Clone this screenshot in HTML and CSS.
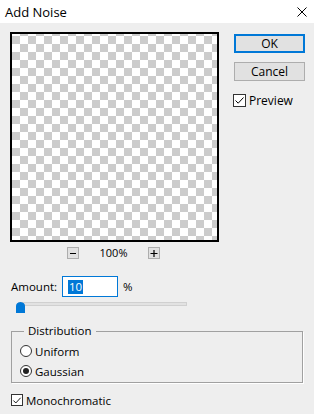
FILE: index.html
```html
<!DOCTYPE html>
<html>
  <head>
    <meta charset="utf-8" />
    <title>Add Noise</title>
    <link rel="stylesheet" href="styles.css">
  </head>
  <body>
    <div class="dialog">
      <div class="titlebar">
        <span class="title">Add Noise</span>
        <svg class="close" width="10" height="10" viewBox="0 0 10 10">
          <path d="M0.5 0.5 L9.5 9.5 M9.5 0.5 L0.5 9.5" stroke="#000" stroke-width="1" fill="none"/>
        </svg>
      </div>

      <div class="top">
        <div class="preview-col">
          <div class="preview"></div>
          <div class="zoom-row">
            <span class="zoom-btn">
              <svg width="10" height="10" viewBox="0 0 10 10"><path d="M2 5.5 H8" stroke="#000" stroke-width="1"/></svg>
            </span>
            <span class="zoom-value">100%</span>
            <span class="zoom-btn">
              <svg width="10" height="10" viewBox="0 0 10 10"><path d="M1.5 5.5 H8.5 M5 2 V9" stroke="#000" stroke-width="1.2"/></svg>
            </span>
          </div>
        </div>
        <div class="actions">
          <div class="btn btn-default">OK</div>
          <div class="btn">Cancel</div>
          <div class="check preview-check">
            <span class="box">
              <svg width="11" height="11" viewBox="0 0 11 11"><path d="M1.5 5.5 L4.2 8.2 L9.5 2.5" stroke="#000" stroke-width="1" fill="none"/></svg>
            </span>
            Preview
          </div>
        </div>
      </div>

      <div class="amount-row">
        <span class="amount-label">Amount:</span>
        <span class="amount-input"><span class="selected">10</span></span>
        <span class="percent">%</span>
      </div>

      <div class="slider">
        <div class="track"></div>
        <svg class="thumb" width="9" height="11" viewBox="0 0 9 11">
          <path d="M0 11 V4 Q0 0.5 4.5 0 Q9 0.5 9 4 V11 Z" fill="#0078d7"/>
        </svg>
      </div>

      <fieldset class="group">
        <legend>Distribution</legend>
        <div class="radio-row"><span class="radio"></span>Uniform</div>
        <div class="radio-row"><span class="radio on"></span>Gaussian</div>
      </fieldset>

      <div class="check mono">
        <span class="box">
          <svg width="11" height="11" viewBox="0 0 11 11"><path d="M1.5 5.5 L4.2 8.2 L9.5 2.5" stroke="#000" stroke-width="1" fill="none"/></svg>
        </span>
        Monochromatic
      </div>
    </div>
  </body>
</html>
```

FILE: styles.css
```css
body {
    margin: 0;
    background: #eeeeee;
    color: #000;
    font-family: "Open Sans", "Noto Sans", sans-serif;
    font-size: 11.5px;
}
.dialog {
    width: 314px;
    height: 414px;
}
.titlebar {
    height: 23px;
    background: #fff;
    display: flex;
    align-items: center;
    justify-content: space-between;
    padding: 0 7px 0 5px;
}
.title {
    font-size: 13px;
}
.top {
    display: flex;
    padding: 9px 0 0 10px;
}
.preview-col {
    width: 209px;
}
.preview {
    height: 210px;
    box-sizing: border-box;
    border: 2px solid #000;
    background-image: conic-gradient(#fff 25%, #cccccc 0 50%, #fff 0 75%, #cccccc 0);
    background-size: 16px 16px;
    background-position: 0 2px;
}
.zoom-row {
    display: flex;
    align-items: center;
    height: 12px;
    margin-top: 5px;
    padding-left: 57px;
}
.zoom-btn {
    width: 12px;
    height: 12px;
    box-sizing: border-box;
    border: 1px solid #adadad;
    background: #e1e1e1;
    display: flex;
    align-items: center;
    justify-content: center;
}
.zoom-value {
    width: 69px;
    text-align: center;
    font-size: 11px;
    line-height: 12px;
}
.actions {
    width: 71px;
    margin-left: 15px;
    padding-top: 2px;
}
.btn {
    height: 19px;
    box-sizing: border-box;
    border: 1px solid #adadad;
    background: #e1e1e1;
    display: flex;
    align-items: center;
    justify-content: center;
    font-size: 12px;
    margin-bottom: 9px;
}
.btn-default {
    border-color: #0078d7;
    box-shadow: inset 0 0 0 1px #0078d7;
}
.check {
    display: flex;
    align-items: center;
    height: 20px;
}
.box {
    width: 13px;
    height: 13px;
    box-sizing: border-box;
    border: 1px solid #333;
    background: #fff;
    display: flex;
    align-items: center;
    justify-content: center;
    margin-right: 3px;
}
.preview-check {
    margin-top: 4px;
    margin-left: -1px;
    font-size: 12px;
}
.amount-row {
    display: flex;
    align-items: center;
    height: 21px;
    margin-top: 17px;
    padding-left: 11px;
}
.amount-label {
    width: 51px;
}
.amount-input {
    width: 56px;
    height: 21px;
    box-sizing: border-box;
    border: 1px solid #0078d7;
    background: #fff;
    display: flex;
    align-items: center;
    padding-left: 5px;
}
.selected {
    background: #0078d7;
    color: #fff;
    line-height: 14px;
    padding: 0 1px;
}
.percent {
    margin-left: 5px;
}
.slider {
    position: relative;
    width: 171px;
    height: 11px;
    margin: 5px 0 0 16px;
}
.track {
    height: 4px;
    box-sizing: border-box;
    margin: 5px 0 0 2px;
    border: 1px solid #d0d0d0;
    background: #e2e2e2;
}
.thumb {
    position: absolute;
    left: 0;
    top: 0;
}
.group {
    width: 292px;
    box-sizing: border-box;
    margin: 10px 0 0 11px;
    padding: 2px 0 1px 8px;
    border: 1px solid #a0a0a0;
    box-shadow: 1px 1px 0 #fff;
}
.group legend {
    margin-left: 4px;
    padding: 0 4px;
    line-height: 16px;
}
.radio-row {
    display: flex;
    align-items: center;
    height: 20px;
}
.radio {
    width: 12px;
    height: 12px;
    box-sizing: border-box;
    border: 1px solid #333;
    border-radius: 50%;
    background: #fff;
    margin-right: 3px;
    display: flex;
    align-items: center;
    justify-content: center;
}
.radio.on::after {
    content: "";
    width: 6px;
    height: 6px;
    border-radius: 50%;
    background: #222;
}
.mono {
    margin: 7px 0 0 11px;
}
.mono .box {
    width: 12px;
    height: 12px;
}
```
